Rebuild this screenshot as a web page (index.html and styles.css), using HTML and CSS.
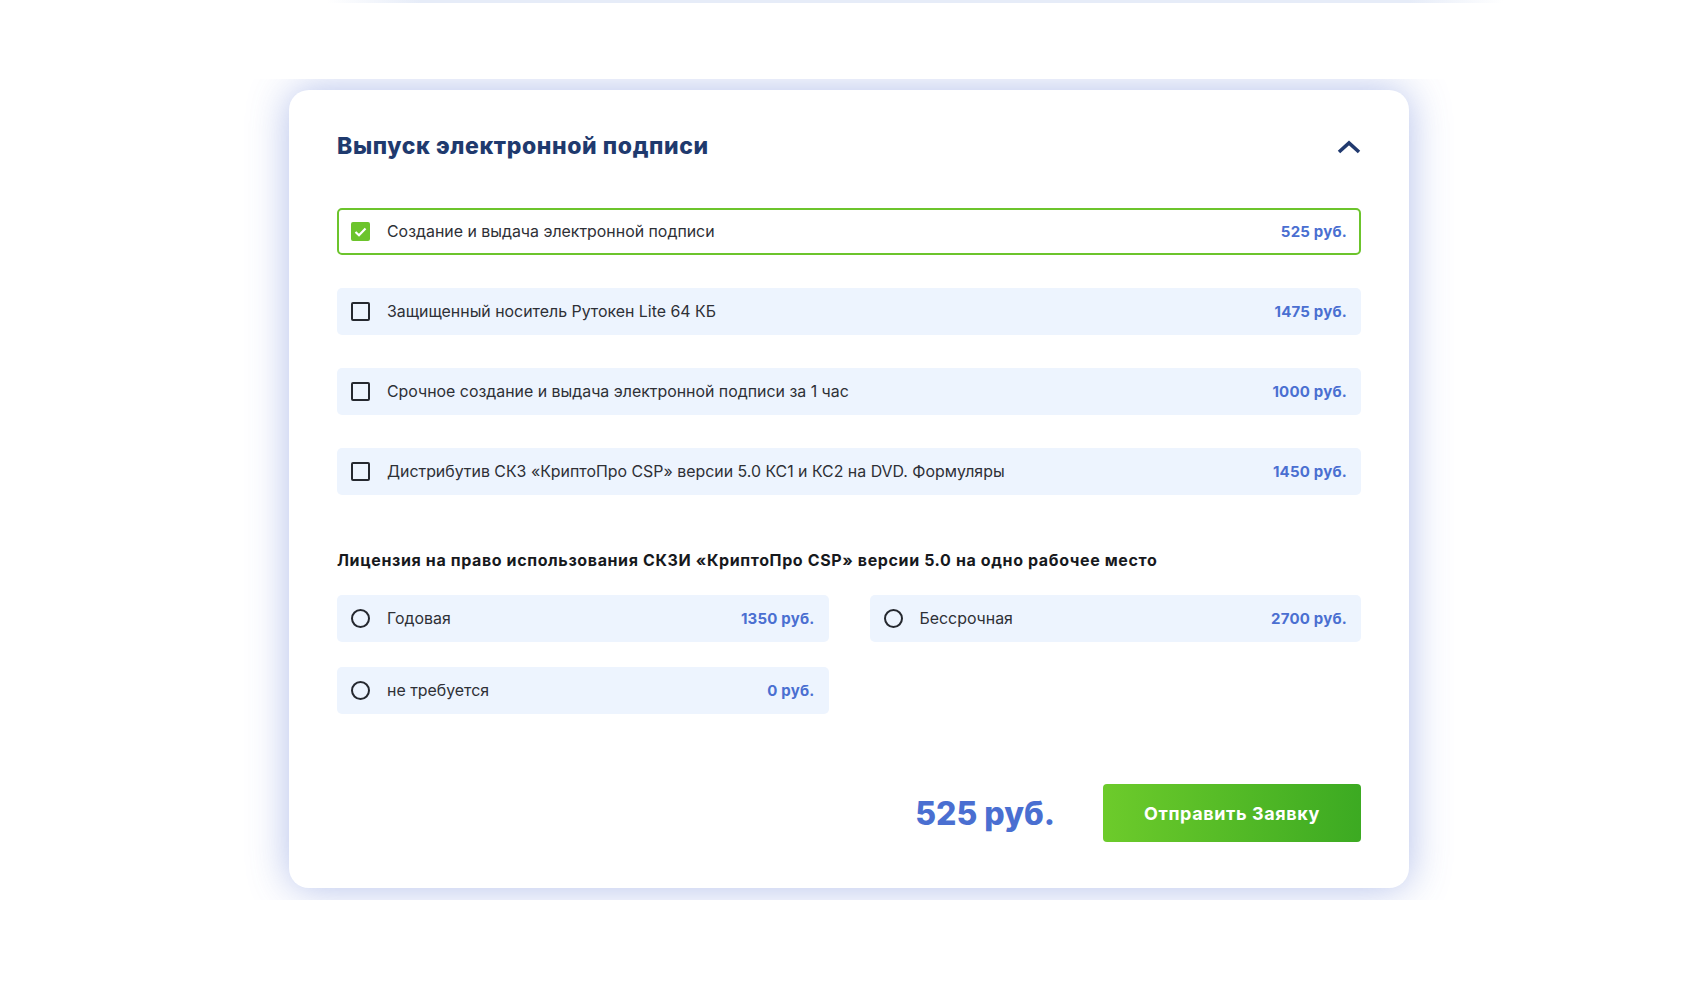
FILE: index.html
```html
<!DOCTYPE html>
<html lang="ru">
<head>
<meta charset="utf-8">
<title>Выпуск электронной подписи</title>
<link rel="stylesheet" href="styles.css">
</head>
<body>
<div class="topline"></div>
<section class="band">
  <div class="card">
    <div class="card-head">
      <h2 class="card-title">Выпуск электронной подписи</h2>
      <svg class="chevron" width="24" height="14" viewBox="0 0 24 14"><polyline points="2,12 12,3 22,12" fill="none" stroke="#213a6f" stroke-width="3.6"/></svg>
    </div>

    <div class="options">
      <label class="opt opt-checked">
        <span class="check check-on"><svg width="13" height="10" viewBox="0 0 13 10"><polyline points="1.5,5 5,8.2 11.5,1.5" fill="none" stroke="#fff" stroke-width="2.2"/></svg></span>
        <span class="opt-name">Создание и выдача электронной подписи</span>
        <span class="opt-price">525 руб.</span>
      </label>
      <label class="opt">
        <span class="check"></span>
        <span class="opt-name">Защищенный носитель Рутокен Lite 64 КБ</span>
        <span class="opt-price">1475 руб.</span>
      </label>
      <label class="opt">
        <span class="check"></span>
        <span class="opt-name">Срочное создание и выдача электронной подписи за 1 час</span>
        <span class="opt-price">1000 руб.</span>
      </label>
      <label class="opt">
        <span class="check"></span>
        <span class="opt-name">Дистрибутив СКЗ «КриптоПро CSP» версии 5.0 КС1 и КС2 на DVD. Формуляры</span>
        <span class="opt-price">1450 руб.</span>
      </label>
    </div>

    <h3 class="sub-title">Лицензия на право использования СКЗИ «КриптоПро CSP» версии 5.0 на одно рабочее место</h3>

    <div class="radios">
      <label class="opt">
        <span class="radio"></span>
        <span class="opt-name">Годовая</span>
        <span class="opt-price">1350 руб.</span>
      </label>
      <label class="opt">
        <span class="radio"></span>
        <span class="opt-name">Бессрочная</span>
        <span class="opt-price">2700 руб.</span>
      </label>
      <label class="opt">
        <span class="radio"></span>
        <span class="opt-name">не требуется</span>
        <span class="opt-price">0 руб.</span>
      </label>
    </div>

    <div class="card-foot">
      <div class="total">525 руб.</div>
      <button class="submit" type="button">Отправить Заявку</button>
    </div>
  </div>
</section>
</body>
</html>
```

FILE: styles.css
```css
* { box-sizing: border-box; }

body {
  margin: 0;
  background: #ffffff;
  font-family: Inter, "Noto Sans", sans-serif;
  color: #2b2d33;
}

.topline {
  height: 3px;
  margin-left: 327px;
  width: 1176px;
  background: linear-gradient(90deg, rgba(232,237,248,0), #e6ecf8 8%, #e6ecf8 92%, rgba(232,237,248,0));
}

.band {
  margin-top: 76px;
  overflow: hidden;
  padding: 11px 0 12px 289px;
}

.card {
  width: 1120px;
  background: #ffffff;
  border-radius: 20px;
  padding: 43px 48px 46px 48px;
  box-shadow: 0 0 40px rgba(70, 100, 205, 0.42);
}

.card-head {
  display: flex;
  justify-content: space-between;
  align-items: center;
  margin-bottom: 49px;
  height: 26px;
}

.card-title {
  margin: 0;
  font-family: Inter, sans-serif;
  font-weight: 800;
  font-size: 23px;
  line-height: 26px;
  letter-spacing: 0.6px;
  color: #1f3a6e;
}

.chevron { display: block; margin-top: 2px; }

.options {
  display: flex;
  flex-direction: column;
  gap: 33px;
}

.opt {
  display: flex;
  align-items: center;
  height: 47px;
  padding: 0 14px;
  background: #edf4fe;
  border-radius: 5px;
  cursor: pointer;
}

.opt-checked {
  background: #ffffff;
  border: 2px solid #6cc42c;
  padding: 0 12px;
}

.check {
  flex: none;
  width: 19px;
  height: 19px;
  border: 2px solid #25282f;
  border-radius: 2px;
  margin-right: 17px;
  display: flex;
  align-items: center;
  justify-content: center;
}

.check-on {
  background: #6cc42c;
  border-color: #6cc42c;
}

.radio {
  flex: none;
  width: 19px;
  height: 19px;
  border: 2px solid #25282f;
  border-radius: 50%;
  margin-right: 17px;
}

.opt-name {
  flex: 1;
  font-size: 15.9px;
  line-height: 20px;
  padding-top: 1px;
  color: #2e3036;
}

.opt-price {
  font-weight: 700;
  font-size: 15px;
  color: #4a6fd1;
  letter-spacing: 0.2px;
}

.sub-title {
  margin: 55px 0 0 0;
  font-weight: 700;
  font-size: 16px;
  line-height: 20px;
  letter-spacing: 0.62px;
  color: #17191d;
}

.radios {
  margin-top: 25px;
  display: grid;
  grid-template-columns: 1fr 1fr;
  column-gap: 41px;
  row-gap: 25px;
}

.card-foot {
  margin-top: 70px;
  display: flex;
  justify-content: flex-end;
  align-items: center;
  gap: 48px;
}

.total {
  font-weight: 800;
  font-size: 32px;
  color: #4a6fd1;
}

.submit {
  width: 258px;
  height: 58px;
  border: none;
  border-radius: 4px;
  background: linear-gradient(90deg, #6dcb2b, #3caa22);
  color: #ffffff;
  font-family: Inter, sans-serif;
  font-weight: 700;
  font-size: 18px;
  letter-spacing: 0.6px;
  cursor: pointer;
}
```
